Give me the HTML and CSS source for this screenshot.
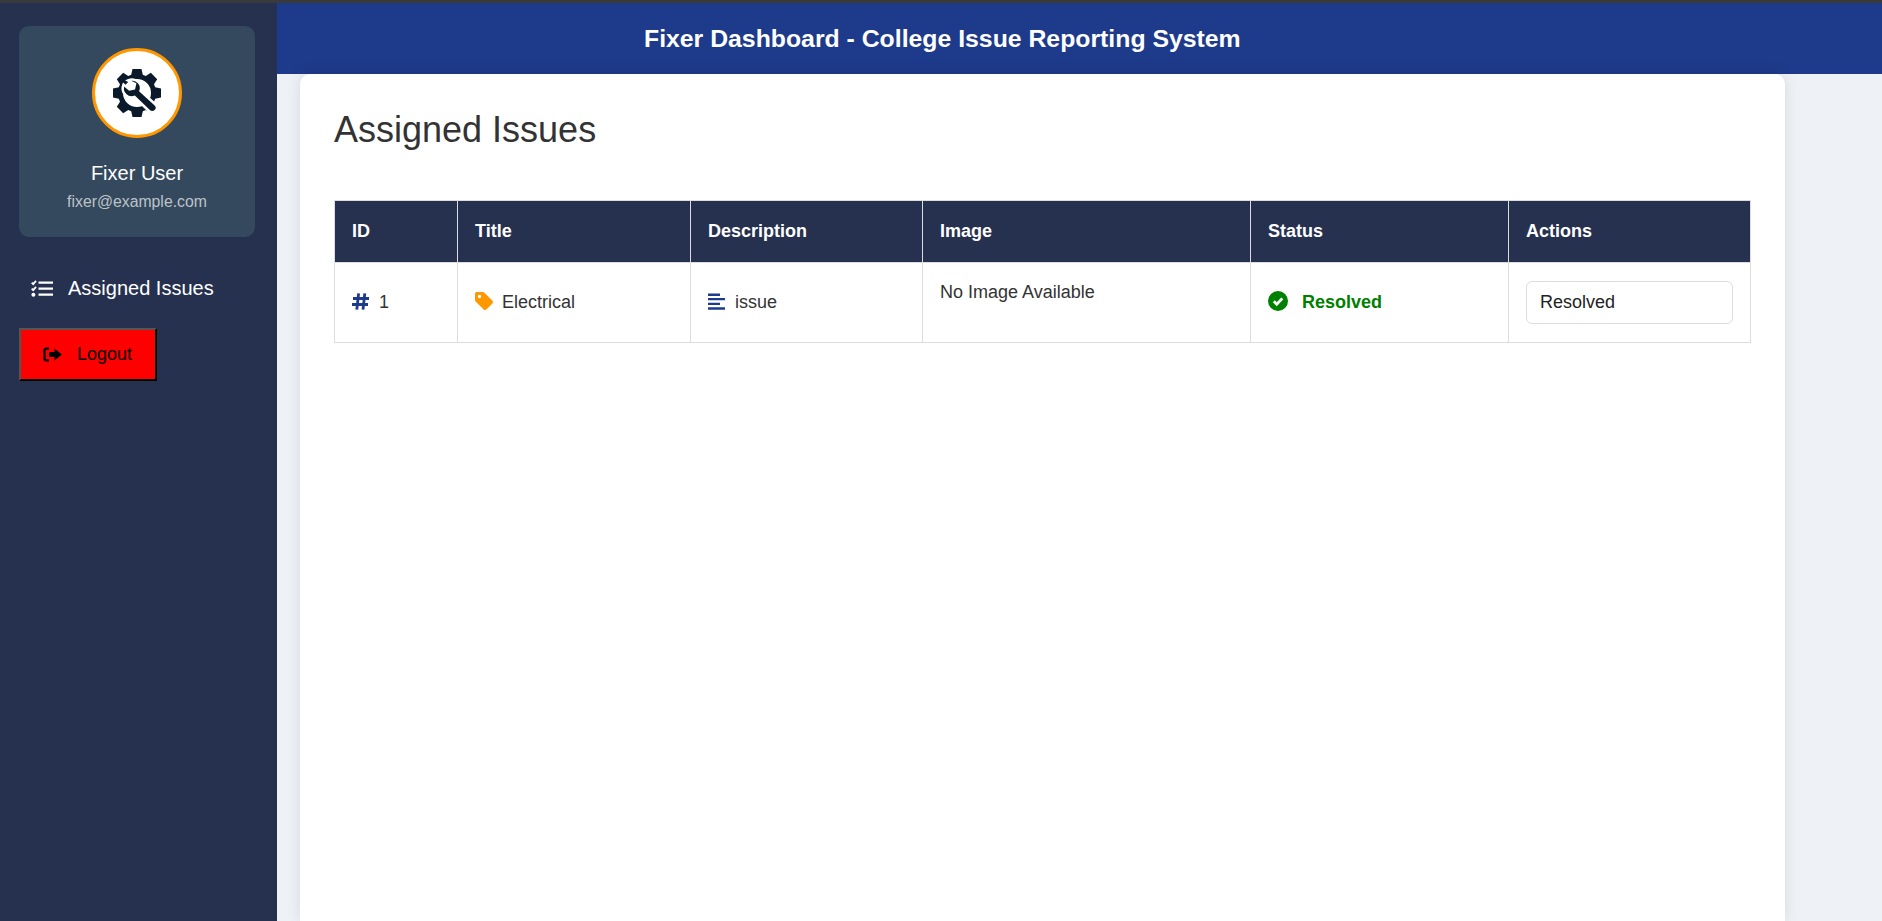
FILE: index.html
```html
<!DOCTYPE html>
<html lang="en">
<head>
    <title>Fixer Dashboard</title>
    <link rel="stylesheet" href="styles.css">
</head>
<body>
    <div class="topline"></div>
    <div class="layout">
        <aside class="sidebar">
            <div class="profile">
                <div class="avatar">
                    <svg class="avatar-icon" viewBox="0 0 48 48">
                        <path fill="#0b1a2b" fill-rule="evenodd" d="M19.500 0h9l1.300 5.800 3 1.200 5-3.200 6.400 6.400-3.200 5 1.200 3 5.800 1.300v9l-5.800 1.300-1.200 3 3.200 5-6.400 6.400-5-3.200-3 1.200-1.300 5.800h-9l-1.300-5.800-3-1.200-5 3.200-6.400-6.400 3.200-5-1.200-3L0 28.500v-9l5.800-1.300 1.200-3-3.200-5 6.400-6.400 5 3.200 3-1.200zM24 10a14 14 0 1 0 0 28 14 14 0 0 0 0-28z"/>
                        <path fill="#0b1a2b" stroke="#fff" stroke-width="2.500" d="M15 11.500a9.500 9.500 0 0 1 10.500 1.500c2.500 2.500 3.200 5.800 2 9l15 13.500a4.500 4.500 0 0 1-6.500 6.500L21.500 28c-3 1-6.500.4-9-2a9.500 9.500 0 0 1-2-10.500l6 5 4.500-1 1-4.500z"/>
                    </svg>
                </div>
                <div class="profile-name">Fixer User</div>
                <div class="profile-mail">fixer@example.com</div>
            </div>
            <a class="nav-link" href="#">
                <svg class="nav-icon" viewBox="0 0 22 17">
                    <path fill="none" stroke="#fff" stroke-width="1.800" d="M.7 2.600l1.500 1.500L5 .8M.7 8.600l1.500 1.500L5 6.800"/>
                    <circle cx="2.400" cy="14.800" r="2" fill="#fff"/>
                    <path fill="#fff" d="M7.500 1.400H22v2.400H7.500zM7.500 7.400H22v2.400H7.500zM7.500 13.400H22v2.400H7.500z"/>
                </svg>
                Assigned Issues
            </a>
            <button class="logout">
                <svg class="logout-icon" viewBox="0 0 19 15">
                    <path fill="#000" d="M6 .5v2.200H3.500a1 1 0 0 0-1 1v7.600a1 1 0 0 0 1 1H6v2.200H3.500A3.200 3.200 0 0 1 .3 11.300V3.700A3.200 3.200 0 0 1 3.500.5zM11.500 1.500L19 7.500l-7.500 6v-3.500H6V5h5.500z"/>
                </svg>
                Logout
            </button>
        </aside>
        <div class="content">
            <header class="header">
                <h1>Fixer Dashboard - College Issue Reporting System</h1>
            </header>
            <main class="card">
                <h2>Assigned Issues</h2>
                <table class="issues">
                    <thead>
                        <tr>
                            <th class="col-id">ID</th>
                            <th class="col-title">Title</th>
                            <th class="col-desc">Description</th>
                            <th class="col-image">Image</th>
                            <th class="col-status">Status</th>
                            <th>Actions</th>
                        </tr>
                    </thead>
                    <tbody>
                        <tr>
                            <td>
                                <svg class="cell-icon" viewBox="0 0 17 17">
                                    <path fill="none" stroke="#1e3a8a" stroke-width="2.800" d="M6.600.3L4.800 16.700M12.800.3L11 16.700M1 5.500h16M0 11.500h16"/>
                                </svg>
                                1
                            </td>
                            <td>
                                <svg class="cell-icon tag-icon" viewBox="0 0 16 16">
                                    <path fill="#ff9800" fill-rule="evenodd" d="M1.500 0H7c.5 0 1 .2 1.400.6l6.900 7a2 2 0 0 1 0 2.800l-5 5a2 2 0 0 1-2.800 0l-7-7A2 2 0 0 1 0 7V1.500C0 .7.700 0 1.500 0zM4 2.500a1.500 1.500 0 1 0 0 3 1.500 1.500 0 0 0 0-3z"/>
                                </svg>
                                Electrical
                            </td>
                            <td>
                                <svg class="cell-icon" viewBox="0 0 17 17">
                                    <path fill="#1e3a8a" d="M0 .5h12V3H0zM0 5h17v2.300H0zM0 9.700h12V12H0zM0 14.300h17v2.400H0z"/>
                                </svg>
                                issue
                            </td>
                            <td class="no-image">No Image Available</td>
                            <td class="status">
                                <svg class="status-icon" viewBox="0 0 20 20">
                                    <circle cx="10" cy="10" r="10" fill="#008000"/>
                                    <path fill="none" stroke="#fff" stroke-width="2.800" d="M5.800 10.200l3 3 5.500-5.800"/>
                                </svg>
                                Resolved
                            </td>
                            <td>
                                <div class="select-box">Resolved</div>
                            </td>
                        </tr>
                    </tbody>
                </table>
            </main>
        </div>
    </div>
</body>
</html>
```

FILE: styles.css
```css
* {
    box-sizing: border-box;
}
html,
body {
    height: 100%;
}
body {
    margin: 0;
    display: flex;
    flex-direction: column;
    font-family: "Liberation Sans", Arial, sans-serif;
    background-color: #eef1f6;
    overflow: hidden;
}
.topline {
    height: 3px;
    flex: none;
    background-color: #3a3a3a;
}
.layout {
    flex: 1;
    display: flex;
    min-height: 0;
}
.sidebar {
    width: 277px;
    flex: none;
    padding: 23px 22px 23px 19px;
    background-color: #26314f;
}
.profile {
    height: 211px;
    padding-top: 22px;
    border-radius: 10px;
    background-color: #34495e;
    text-align: center;
}
.avatar {
    width: 90px;
    height: 90px;
    margin: 0 auto;
    display: flex;
    align-items: center;
    justify-content: center;
    border: 3px solid #ff9800;
    border-radius: 50%;
    background-color: #fff;
}
.avatar-icon {
    width: 48px;
    height: 48px;
}
.profile-name {
    margin-top: 24px;
    font-size: 20px;
    color: #fff;
}
.profile-mail {
    margin-top: 8px;
    font-size: 15.8px;
    color: #bdc3c7;
}
.nav-link {
    display: flex;
    align-items: center;
    gap: 15px;
    margin-top: 40px;
    padding-left: 12px;
    font-size: 20px;
    color: #fff;
    text-decoration: none;
}
.nav-icon {
    width: 22px;
    height: 17px;
}
.logout {
    display: flex;
    align-items: center;
    gap: 15px;
    width: 138px;
    height: 53px;
    margin-top: 28px;
    padding: 0 0 0 22px;
    border: 2px outset #555;
    border-color: #555 #000 #000 #555;
    background-color: #f00;
    font-family: inherit;
    font-size: 18px;
    color: #000;
}
.logout-icon {
    width: 19px;
    height: 15px;
}
.content {
    flex: 1;
    display: flex;
    flex-direction: column;
    min-width: 0;
}
.header {
    height: 71px;
    flex: none;
    display: flex;
    align-items: center;
    padding-left: 367px;
    background-color: #1e3a8a;
}
.header h1 {
    margin: 0;
    font-size: 24.8px;
    color: #fff;
}
.card {
    flex: 1;
    width: 1485px;
    margin-left: 23px;
    padding: 36px 33px 0 34px;
    border-radius: 10px 10px 0 0;
    background-color: #fff;
    box-shadow: 0 0 15px rgba(0, 0, 0, 0.1);
}
.card h2 {
    margin: 0;
    font-size: 36px;
    font-weight: 400;
    line-height: 40px;
    color: #333;
}
.issues {
    width: 1417px;
    margin-top: 50px;
    border-collapse: collapse;
    table-layout: fixed;
    font-size: 18px;
    color: #333;
}
.issues th,
.issues td {
    padding: 17px;
    border: 1px solid #ddd;
    text-align: left;
}
.issues th {
    height: 62px;
    background-color: #26314f;
    color: #fff;
}
.issues td {
    height: 80px;
}
.col-id {
    width: 123px;
}
.col-title {
    width: 233px;
}
.col-desc {
    width: 232px;
}
.col-image {
    width: 328px;
}
.col-status {
    width: 258px;
}
.cell-icon {
    width: 17px;
    height: 17px;
    margin-right: 5px;
    vertical-align: -2px;
}
.tag-icon {
    width: 18px;
    height: 18px;
    margin-right: 4px;
}
.issues .no-image {
    padding-top: 19px;
    vertical-align: top;
}
.issues .status {
    padding-top: 16px;
    padding-bottom: 18px;
    font-weight: 700;
    color: #008000;
}
.status-icon {
    width: 20px;
    height: 20px;
    margin-right: 9px;
    vertical-align: -3px;
}
.select-box {
    height: 43px;
    padding: 0 13px;
    display: flex;
    align-items: center;
    border: 1px solid #ddd;
    border-radius: 6px;
    color: #222;
}
```
